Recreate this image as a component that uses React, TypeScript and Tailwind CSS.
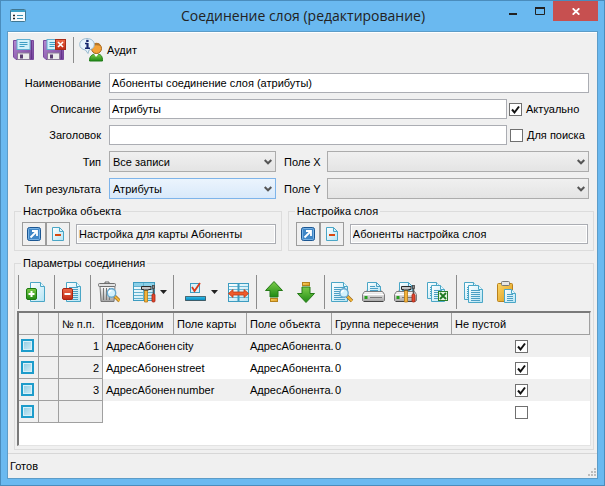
import type { ReactNode } from "react";

const FONT = "font-['Liberation_Sans',Arial,sans-serif]";

/* ---------- icons ---------- */

function Svg({ children }: { children: ReactNode }) {
  return (
    <svg viewBox="0 0 24 24" className="block size-6 shrink-0" aria-hidden="true">
      {children}
    </svg>
  );
}

function Defs() {
  return (
    <svg className="absolute size-0" aria-hidden="true">
      <defs>
        <linearGradient id="paper" x1="0" y1="0" x2="1" y2="1">
          <stop offset="0" stopColor="#ffffff" />
          <stop offset="1" stopColor="#b4e4f4" />
        </linearGradient>
        <linearGradient id="green" x1="0" y1="0" x2="0" y2="1">
          <stop offset="0" stopColor="#7ccc4a" />
          <stop offset="1" stopColor="#1f8a14" />
        </linearGradient>
        <linearGradient id="red" x1="0" y1="0" x2="0" y2="1">
          <stop offset="0" stopColor="#ee6a48" />
          <stop offset="1" stopColor="#c02a14" />
        </linearGradient>
        <linearGradient id="gold" x1="0" y1="0" x2="1" y2="1">
          <stop offset="0" stopColor="#fbd566" />
          <stop offset="1" stopColor="#dd9a1c" />
        </linearGradient>
        <linearGradient id="steel" x1="0" y1="0" x2="0" y2="1">
          <stop offset="0" stopColor="#fafafa" />
          <stop offset="1" stopColor="#a4a4a4" />
        </linearGradient>
        <linearGradient id="purple" x1="0" y1="0" x2="1" y2="1">
          <stop offset="0" stopColor="#b58ad0" />
          <stop offset="1" stopColor="#74409a" />
        </linearGradient>
        <linearGradient id="blue" x1="0" y1="0" x2="0" y2="1">
          <stop offset="0" stopColor="#2fc0ee" />
          <stop offset="1" stopColor="#0784b8" />
        </linearGradient>
      </defs>
    </svg>
  );
}

function Page({ x = 6, y = 2, w = 15, h = 20, lines = true }: { x?: number; y?: number; w?: number; h?: number; lines?: boolean }) {
  const rows = [];
  if (lines) for (let r = y + 5; r < y + h - 2; r += 2) rows.push(r);
  return (
    <g>
      <path d={`M${x + 0.5} ${y + 0.5}h${w - 5}l4 4v${h - 5}h-${w - 1}z`} fill="url(#paper)" stroke="#4aa6c6" />
      <path d={`M${x + w - 4.5} ${y + 0.5}v4h4`} fill="#e8f8fd" stroke="#4aa6c6" />
      {rows.map((r) => (
        <path key={r} d={`M${x + 3} ${r + 0.5}h${w - 6}`} stroke="#4b9fc4" />
      ))}
    </g>
  );
}

function Lens({ x, y }: { x: number; y: number }) {
  return (
    <g>
      <path d={`M${x + 3} ${y + 3}l5 5`} stroke="#9a6a1e" strokeWidth="3.4" />
      <path d={`M${x + 3.5} ${y + 3.5}l4.5 4.5`} stroke="#f2b536" strokeWidth="2" />
      <circle cx={x} cy={y} r="4.2" fill="#d3f1fc" stroke="#69a9cf" strokeWidth="1.4" />
      <path d={`M${x - 2.5} ${y}a2.5 2.5 0 0 1 2.5-2.5`} stroke="#fff" strokeWidth="1.3" fill="none" />
    </g>
  );
}

function Tools({ x }: { x: number }) {
  return (
    <g transform={`translate(${x} 0)`}>
      <path d="M3.500 10h3v12h-3z" fill="#f3b43c" stroke="#b67a14" strokeWidth=".8" />
      <path d="M.5 6.500h9.500v3H8L7 10H3.500L2 9.500H.5z" fill="#c4c4c4" stroke="#2a2a2a" />
      <path d="M12.500 8v6" stroke="#555" strokeWidth="1.600" />
      <rect x="11.500" y="5.500" width="2" height="3" fill="#8a8a8a" stroke="#444" strokeWidth=".8" />
      <rect x="11" y="14" width="3" height="8" rx="1" fill="#e2482c" stroke="#a32414" strokeWidth=".8" />
    </g>
  );
}

function Printer() {
  return (
    <g>
      <path d="M4 12l2-5h12l2 5z" fill="#8d8d8d" />
      <path d="M5.5 12V2.5h9l4 4V12z" fill="url(#paper)" stroke="#4aa6c6" />
      <path d="M14.5 2.5v4h4M8 6.5h5M8 8.5h8M8 10.5h8" stroke="#4b9fc4" fill="none" />
      <path d="M2.5 11.5h18l2 3v6l-1 1h-20l-1-1v-6z" fill="url(#steel)" stroke="#7b7b7b" />
      <path d="M1.5 14.5h20" stroke="#fff" />
      <path d="M8 17.5h12" stroke="#777" />
      <rect x="2.5" y="16" width="3" height="3" fill="#26a01d" />
      <path d="M2 21.5h19" stroke="#444" />
    </g>
  );
}

function Floppy() {
  return (
    <g>
      <path d="M1.5 2.5h20v19H4l-2.500-2.500z" fill="url(#purple)" stroke="#7a4a9e" />
      <path d="M19.500 3v18" stroke="#5d2f84" strokeWidth=".8" />
      <rect x="5" y="1.500" width="13" height="10" fill="#d2f1fa" stroke="#62b0d0" />
      <path d="M7.500 4.500h8M7.500 6.500h8M7.500 8.500h5" stroke="#3f9fc4" />
      <rect x="5.500" y="15" width="12" height="6.500" fill="#ececec" stroke="#8b7c98" />
      <rect x="8" y="16.500" width="3" height="4" fill="#5a3e72" />
    </g>
  );
}

const AddIcon = () => (
  <Svg>
    <Page lines={false} />
    <rect x="2.5" y="8.500" width="10" height="11" rx="1.500" fill="url(#green)" stroke="#1d7a12" />
    <path d="M4.500 14h6M7.500 11v6" stroke="#fff" strokeWidth="2" />
  </Svg>
);
const RemoveIcon = () => (
  <Svg>
    <Page />
    <rect x="2.5" y="8.500" width="10" height="11" rx="1.500" fill="url(#red)" stroke="#a82414" />
    <path d="M4.500 14h6" stroke="#fff" strokeWidth="2" />
  </Svg>
);
const TrashIcon = () => (
  <Svg>
    <path d="M4 6.500h15l-1 15H5z" fill="url(#steel)" stroke="#777" />
    <path d="M7.500 8v12M10.500 8v12M13.500 8v12M16.500 8v3" stroke="#777" />
    <rect x="2.500" y="3.500" width="17" height="3" rx="1" fill="#e2e2e2" stroke="#707070" />
    <path d="M9 3.500v-1.500h4v1.500" stroke="#666" fill="none" />
    <Lens x={15.500} y={13} />
  </Svg>
);
const TableToolsIcon = () => (
  <Svg>
    <rect x="1.500" y="2.500" width="21" height="18" fill="url(#paper)" stroke="#3d9cc0" />
    <rect x="2" y="3" width="20" height="3" fill="#8bd0e8" />
    <path d="M2 6.500h20M2 9.500h20M2 12.500h20M2 15.500h20M2 18.500h20M11.500 3v17" stroke="#62b0ce" />
    <Tools x={9} />
  </Svg>
);
const MarkIcon = () => (
  <Svg>
    <rect x="7.500" y="3.500" width="9" height="9" fill="#d9f1fa" stroke="#3f9dc2" />
    <path d="M9 7l2.500 4L17 3" stroke="#d83b1c" strokeWidth="1.800" fill="none" />
    <rect x="2.500" y="16.500" width="20" height="4" fill="url(#blue)" stroke="#000" strokeDasharray="1 1" />
  </Svg>
);
const ColumnsIcon = () => (
  <Svg>
    <rect x="2.500" y="3.500" width="20" height="18" fill="url(#paper)" stroke="#3d9cc0" />
    <path d="M3 6.500h19M3 9.500h19M3 17.500h19" stroke="#6db9d6" />
    <path d="M12.500 3v19" stroke="#3d9cc0" strokeWidth="2" />
    <path d="M2.500 13.500l4.500-4v2.500h11V9.500l4.500 4-4.500 4V15H7v2.500z" fill="#ef5a2b" stroke="#c23a12" strokeWidth=".8" />
  </Svg>
);
const UpIcon = () => (
  <Svg>
    <path d="M12 1.500l8.500 9h-4.500v6.500H8V10.500H3.500z" fill="url(#green)" stroke="#267a18" />
    <rect x="8.500" y="18.500" width="7" height="3" fill="url(#gold)" stroke="#b5811b" />
  </Svg>
);
const DownIcon = () => (
  <Svg>
    <rect x="8.500" y="2.500" width="7" height="3" fill="url(#gold)" stroke="#b5811b" />
    <path d="M12 22.500l8.500-9h-4.500V7H8v6.500H3.500z" fill="url(#green)" stroke="#267a18" />
  </Svg>
);
const PreviewIcon = () => (
  <Svg>
    <Page x={1} w={17} />
    <Lens x={14} y={13} />
  </Svg>
);
const PrintIcon = () => (
  <Svg>
    <Printer />
  </Svg>
);
const PrintSetupIcon = () => (
  <Svg>
    <Printer />
    <Tools x={7} />
  </Svg>
);
const ExcelIcon = () => (
  <Svg>
    <Page x={1} w={14} h={17} />
    <Page x={5} y={5} w={14} h={17} />
    <rect x="12.500" y="11.500" width="9" height="9" fill="#e6f5e2" stroke="#2b7f2b" />
    <path d="M14 13l6 6M20 13l-6 6" stroke="#1f7a24" strokeWidth="1.800" />
  </Svg>
);
const CopyIcon = () => (
  <Svg>
    <Page x={2} w={14} h={18} />
    <Page x={6} y={5} w={15} h={18} />
  </Svg>
);
const PasteIcon = () => (
  <Svg>
    <rect x="3.500" y="3.500" width="15" height="18" rx="1" fill="url(#gold)" stroke="#b9811b" />
    <rect x="7.500" y="1.500" width="8" height="4" rx="1" fill="#e6e6e6" stroke="#777" />
    <Page x={10} y={9} w={12} h={14} />
  </Svg>
);
const SaveIcon = () => (
  <Svg>
    <Floppy />
  </Svg>
);
const SaveCloseIcon = () => (
  <Svg>
    <Floppy />
    <rect x="13.500" y="1.500" width="10" height="10" fill="url(#red)" stroke="#a82c18" />
    <path d="M16 4l5 5M21 4l-5 5" stroke="#fff" strokeWidth="1.600" />
  </Svg>
);
const AuditIcon = () => (
  <Svg>
    <path d="M10.500 23c0-5 2.500-7 7-7s6 2 6 7z" fill="url(#green)" stroke="#1f7d18" />
    <path d="M15 16l2 3 2.500-3z" fill="#fff" />
    <circle cx="17.500" cy="10.500" r="5" fill="#f3a33a" stroke="#a8641a" />
    <path d="M13 8c1-4.500 8-4.500 9 0-3-1-6-1-9 0z" fill="#b5772a" />
    <path d="M8 .5c4 0 7.300 2.500 7.300 6 0 3-2.300 5-5.300 5.500l-1 3.500-2.500-3.500C3 11.500.700 9.500.700 6.500c0-3.500 3.300-6 7.300-6z" fill="#e6f3fc" stroke="#9bbbd0" />
    <path d="M6 5.500h2.500M6 10.200h5" stroke="#15286e" strokeWidth="1.400" fill="none" />
    <path d="M8.500 5v5.500" stroke="#15286e" strokeWidth="2.200" />
    <rect x="7.200" y="1.800" width="2.400" height="2.200" fill="#15286e" />
  </Svg>
);

/* ---------- controls ---------- */

function Separator() {
  return <span className="ml-0.5 mr-px w-px shrink-0 self-stretch bg-[#8c8c8c]" />;
}

function ToolButton({ label, drop, children }: { label: string; drop?: boolean; children: ReactNode }) {
  return (
    <button type="button" aria-label={label} className={`flex shrink-0 items-center p-1 ${drop ? "ml-1 w-[43px] gap-1" : ""}`}>
      {children}
      {drop && (
        <svg viewBox="0 0 7 4" className="h-1 w-[7px] shrink-0" aria-hidden="true">
          <path d="M0 0h7L3.500 4z" fill="#222" />
        </svg>
      )}
    </button>
  );
}

function Check({ id, label, on }: { id?: string; label?: string; on?: boolean }) {
  return (
    <span className="inline-grid size-[13px] shrink-0 align-middle">
      <input
        id={id}
        type="checkbox"
        aria-label={label}
        defaultChecked={on}
        className="peer col-start-1 row-start-1 size-[13px] appearance-none border border-[#707070] bg-white"
      />
      <svg
        viewBox="0 0 13 13"
        className="pointer-events-none invisible col-start-1 row-start-1 size-[13px] peer-checked:visible"
        aria-hidden="true"
      >
        <path d="M3 6.500l2.500 3 4.500-6" fill="none" stroke="#111" strokeWidth="2" />
      </svg>
    </span>
  );
}

function Drop({ id, value, active, className }: { id: string; value: string; active?: boolean; className: string }) {
  const skin = active
    ? "border-[#7eb4ea] bg-linear-to-b from-[#ebf4fd] to-[#d9e9fa]"
    : "border-[#acacac] bg-linear-to-b from-[#f0f0f0] to-[#e4e4e4]";
  return (
    <span className={`grid ${className}`}>
      <select id={id} className={`col-start-1 row-start-1 h-[21px] w-full appearance-none border pl-[3px] pt-px leading-4 ${skin}`}>
        <option>{value}</option>
      </select>
      <svg
        viewBox="0 0 8 6"
        className="pointer-events-none col-start-1 row-start-1 mr-1 h-1.5 w-2 self-center justify-self-end"
        aria-hidden="true"
      >
        <path d="M.7 1L4 4.300 7.300 1" fill="none" stroke="#555" strokeWidth="2" />
      </svg>
    </span>
  );
}

function Row({ id, label, children }: { id: string; label: string; children: ReactNode }) {
  return (
    <div className="flex items-center">
      <label htmlFor={id} className="mr-2 w-[93px] shrink-0 whitespace-nowrap text-right">
        {label}
      </label>
      {children}
    </div>
  );
}

const inputBox = "h-5 min-w-0 flex-1 border border-[#abadb3] px-0.5";

function Reference({ title, value }: { title: string; value: string }) {
  return (
    <fieldset className="min-w-0 border border-[#dcdcdc] pb-1 pl-[7px] pr-[5px] pt-1">
      <legend className="-ml-px px-0.5">{title}</legend>
      <div className="flex items-center">
        <button type="button" aria-label="Открыть" className="grid size-6 place-items-center border border-[#9c9c9c]">
          <svg viewBox="0 0 14 14" className="size-[14px]" aria-hidden="true">
            <rect x=".5" y=".5" width="13" height="13" rx="2" fill="#3f86c6" stroke="#1b5692" />
            <rect x="1.500" y="1.500" width="11" height="11" rx="1" fill="none" stroke="#79b2e4" />
            <path d="M3.500 10.500L9 5M5 4h5v5" fill="none" stroke="#fff" strokeWidth="1.800" />
          </svg>
        </button>
        <button type="button" aria-label="Очистить" className="grid size-6 place-items-center border border-[#9c9c9c]">
          <svg viewBox="0 0 12 14" className="h-[14px] w-3" aria-hidden="true">
            <path d="M.5.5h7l4 4v9H.5z" fill="url(#paper)" stroke="#4aa6c6" />
            <path d="M7.500.5v4h4" fill="none" stroke="#4aa6c6" />
            <path d="M3 8h6" stroke="#d9480f" strokeWidth="2" />
          </svg>
        </button>
        <input
          readOnly
          aria-label={title}
          defaultValue={value}
          className="ml-1.5 h-5 min-w-0 flex-1 border border-[#abadb3] bg-[#f0f0f0] px-0.5 inset-ring inset-ring-white"
        />
      </div>
    </fieldset>
  );
}

/* ---------- data ---------- */

const rows = [
  { n: 1, field: "city" },
  { n: 2, field: "street" },
  { n: 3, field: "number" },
];
const headers = ["", "", "№ п.п.", "Псевдоним", "Поле карты", "Поле объекта", "Группа пересечения", "Не пустой"];
const fixedCell = "border-b border-r border-[#a0a0a0] bg-[#f0f0f0]";
const textCell = "whitespace-nowrap pl-[3px]";

function RowMarker() {
  return (
    <button
      type="button"
      aria-label="Выбрать строку"
      className="ml-0.5 block size-[13px] border-2 border-[#1d9ccb] bg-linear-to-br from-[#8ccbe2] to-[#d2edf6] inset-ring inset-ring-[#d8f0f8]"
    />
  );
}

export default function App() {
  return (
    <div className={`flex min-h-screen flex-col border border-[#4a8cbc] bg-[#6ab9f0] px-1.5 pb-1.5 text-[11px] leading-[14px] text-black ${FONT}`}>
      <Defs />
      <header className="flex h-[30px] shrink-0 items-start">
        <svg viewBox="0 0 16 13" className="ml-[3px] mt-2 h-[13px] w-4 shrink-0" aria-hidden="true">
          <rect x=".5" y=".5" width="15" height="12" rx="1" fill="#f4fafd" stroke="#3f7692" />
          <path d="M1 2h14" stroke="#3aa0c8" strokeWidth="2" />
          <path d="M3 6.500h2M3 9.500h2" stroke="#222" strokeWidth="1.500" />
          <path d="M7 6.500h6M7 9.500h6" stroke="#3b8db0" />
        </svg>
        <h1 className="min-w-0 flex-1 truncate pl-20 pt-1 text-center font-['Open_Sans','Noto_Sans',sans-serif] text-[14px] leading-[22px] text-[#222]">
          Соединение слоя (редактирование)
        </h1>
        <div className="flex shrink-0">
          <button type="button" aria-label="Свернуть" className="grid h-5 w-[26px] place-items-center">
            <svg viewBox="0 0 10 8" className="h-2 w-2.5" aria-hidden="true">
              <path d="M1 7h8" stroke="#222" strokeWidth="2" />
            </svg>
          </button>
          <button type="button" aria-label="Развернуть" className="grid h-5 w-[27px] place-items-center">
            <svg viewBox="0 0 10 8" className="h-2 w-2.5" aria-hidden="true">
              <path d="M.5 1v6.500h9V1" fill="none" stroke="#222" />
              <path d="M0 1h10" stroke="#222" strokeWidth="2" />
            </svg>
          </button>
          <button type="button" aria-label="Закрыть" className="grid h-5 w-[45px] place-items-center bg-[#c75050]">
            <svg viewBox="0 0 8 7" className="h-[7px] w-2" aria-hidden="true">
              <path d="M.7.300l6.600 6.400M7.300.300L.7 6.700" stroke="#fff" strokeWidth="1.800" />
            </svg>
          </button>
        </div>
      </header>

      <main className="flex flex-1 flex-col border border-[#5c9cc8] bg-[#f0f0f0]">
        <div className="flex h-[35px] items-center border-t border-white">
          <div className="flex h-[26px] items-center pl-px">
            <button type="button" aria-label="Сохранить" className="px-[3px]">
              <SaveIcon />
            </button>
            <button type="button" aria-label="Сохранить и закрыть" className="mr-0.5 px-[3px]">
              <SaveCloseIcon />
            </button>
            <Separator />
            <button type="button" className="flex items-center gap-1 pl-1">
              <AuditIcon />
              <span>Аудит</span>
            </button>
          </div>
        </div>

        <form className="flex flex-col gap-1.5 pr-2 pt-1.5">
          <Row id="name" label="Наименование">
            <input id="name" defaultValue="Абоненты соединение слоя (атрибуты)" className={`${inputBox} bg-white`} />
          </Row>
          <Row id="descr" label="Описание">
            <input id="descr" defaultValue="Атрибуты" className={`${inputBox} bg-white`} />
            <label className="flex w-[82px] shrink-0 items-center gap-1 whitespace-nowrap pl-0.5">
              <Check id="actual" on />
              Актуально
            </label>
          </Row>
          <Row id="caption" label="Заголовок">
            <input id="caption" className={`${inputBox} bg-white`} />
            <label className="flex w-[82px] shrink-0 items-center gap-1 whitespace-nowrap pl-[3px]">
              <Check id="search" />
              Для поиска
            </label>
          </Row>
          <Row id="type" label="Тип">
            <Drop id="type" value="Все записи" className="w-[167px] shrink-0" />
            <label htmlFor="fieldX" className="mx-2 w-[35px] shrink-0 whitespace-nowrap">
              Поле X
            </label>
            <Drop id="fieldX" value="" className="flex-1" />
          </Row>
          <Row id="result" label="Тип результата">
            <Drop id="result" value="Атрибуты" active className="w-[167px] shrink-0" />
            <label htmlFor="fieldY" className="mx-2 w-[35px] shrink-0 whitespace-nowrap">
              Поле Y
            </label>
            <Drop id="fieldY" value="" className="flex-1" />
          </Row>
        </form>

        <div className="flex flex-1 flex-col gap-[5px] pb-[3px] pl-1.5 pr-[3px] pt-[5px]">
          <div className="grid grid-cols-[7fr_8fr] gap-1.5">
            <Reference title="Настройка объекта" value="Настройка для карты Абоненты" />
            <Reference title="Настройка слоя" value="Абоненты настройка слоя" />
          </div>

          <fieldset className="min-w-0 flex-1 border border-[#dcdcdc] px-0.5 pb-0.5 pt-[5px]">
            <legend className="ml-1 px-0.5">Параметры соединения</legend>
            <div className="-ml-px mb-0.5 flex h-[34px] items-center">
              <Separator />
              <ToolButton label="Добавить"><AddIcon /></ToolButton>
              <Separator />
              <ToolButton label="Удалить"><RemoveIcon /></ToolButton>
              <Separator />
              <ToolButton label="Просмотр удалённых"><TrashIcon /></ToolButton>
              <ToolButton label="Настройка таблицы" drop><TableToolsIcon /></ToolButton>
              <Separator />
              <ToolButton label="Отметить" drop><MarkIcon /></ToolButton>
              <ToolButton label="Ширина колонок"><ColumnsIcon /></ToolButton>
              <Separator />
              <ToolButton label="Вверх"><UpIcon /></ToolButton>
              <ToolButton label="Вниз"><DownIcon /></ToolButton>
              <Separator />
              <ToolButton label="Предварительный просмотр"><PreviewIcon /></ToolButton>
              <ToolButton label="Печать"><PrintIcon /></ToolButton>
              <ToolButton label="Настройка печати"><PrintSetupIcon /></ToolButton>
              <ToolButton label="Экспорт в Excel"><ExcelIcon /></ToolButton>
              <Separator />
              <ToolButton label="Копировать"><CopyIcon /></ToolButton>
              <ToolButton label="Вставить"><PasteIcon /></ToolButton>
            </div>

            <div className="border-2 border-b border-r border-b-[#e3e3e3] border-l-[#7a7a7a] border-r-[#e3e3e3] border-t-[#7a7a7a] bg-white pb-[22px]">
              <table className="w-full table-fixed border-separate border-spacing-0">
                <colgroup>
                  <col className="w-5" />
                  <col className="w-5" />
                  <col className="w-11" />
                  <col className="w-[71px]" />
                  <col className="w-[73px]" />
                  <col className="w-[85px]" />
                  <col className="w-[120px]" />
                  <col />
                </colgroup>
                <thead>
                  <tr className="h-[22px]">
                    {headers.map((h, i) => (
                      <th key={i} className={`${fixedCell} whitespace-nowrap pl-[3px] text-left font-normal`}>
                        {h}
                      </th>
                    ))}
                  </tr>
                </thead>
                <tbody>
                  {rows.map((r) => (
                    <tr key={r.n} className="h-[22px] odd:bg-[#f0f0f0]">
                      <td className={fixedCell}><RowMarker /></td>
                      <td className={fixedCell} />
                      <td className={`${fixedCell} pr-[3px] text-right`}>{r.n}</td>
                      <td className={textCell}>АдресАбонен</td>
                      <td className={textCell}>{r.field}</td>
                      <td className={textCell}>АдресАбонента.</td>
                      <td className={textCell}>0</td>
                      <td className="text-center leading-none"><Check label="Не пустой" on /></td>
                    </tr>
                  ))}
                  <tr className="h-[22px]">
                    <td className={fixedCell}><RowMarker /></td>
                    <td className={fixedCell} />
                    <td className={fixedCell} />
                    <td colSpan={4} />
                    <td className="text-center leading-none"><Check label="Не пустой" /></td>
                  </tr>
                </tbody>
              </table>
            </div>
          </fieldset>
        </div>

        <footer className="flex h-[25px] shrink-0 items-center justify-between border-t border-[#d7d7d7] pl-0.5 pr-px">
          <span>Готов</span>
          <svg viewBox="0 0 8 8" className="mb-0.5 size-2 self-end" fill="#bdbdbd" aria-hidden="true">
            <path d="M6 0h2v2H6zM3 3h2v2H3zM6 3h2v2H6zM0 6h2v2H0zM3 6h2v2H3zM6 6h2v2H6z" />
          </svg>
        </footer>
      </main>
    </div>
  );
}
